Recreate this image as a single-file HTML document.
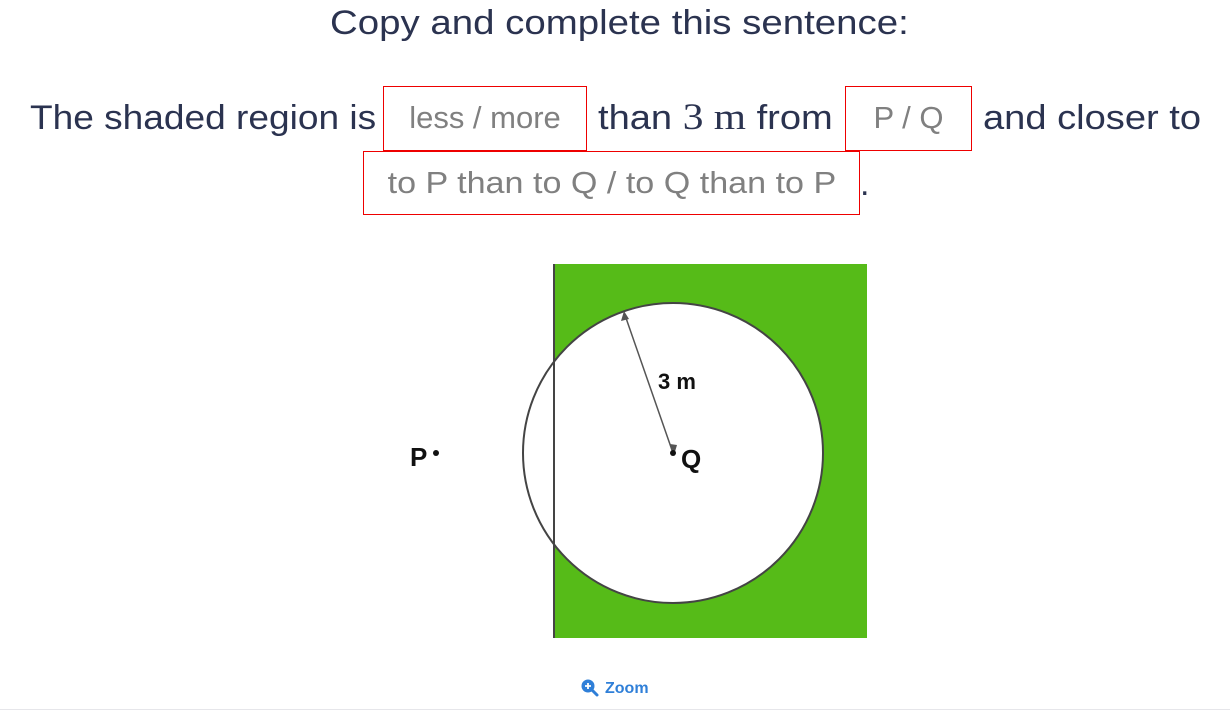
<!DOCTYPE html>
<html><head><meta charset="utf-8"><style>
body{margin:0;width:1230px;height:717px;background:#fff;position:relative;overflow:hidden;font-family:"Liberation Sans",sans-serif;color:#2b3350}
.t{position:absolute;white-space:nowrap;font-size:34px;line-height:40px;transform-origin:0 50%}
.box{position:absolute;border:1px solid #e00;box-sizing:border-box;color:#808080;font-size:31px;text-align:center;line-height:62px}
.box span{display:inline-block}
</style></head><body>
<div class="t" style="left:330px;top:3px;transform:scaleX(1.13)">Copy and complete this sentence:</div>
<div class="t" style="left:30px;top:98px;transform:scaleX(1.09)">The shaded region is</div>
<div class="box" style="left:383px;top:86px;width:204px;height:65px">less / more</div>
<div class="t" style="left:598px;top:98px;transform:scaleX(1.12)">than <span style="font-family:'Liberation Serif',serif;font-size:37px">3 m</span> from</div>
<div class="box" style="left:845px;top:86px;width:127px;height:65px">P / Q</div>
<div class="t" style="left:983px;top:98px;transform:scaleX(1.12)">and closer to</div>
<div class="box" style="left:363px;top:151px;width:497px;height:64px"><span style="transform:scaleX(1.1)">to P than to Q / to Q than to P</span></div>
<div class="t" style="left:860px;top:164px">.</div>
<svg width="1230" height="717" style="position:absolute;left:0;top:0">
<rect x="554" y="264" width="313" height="374" fill="#56bb18"/>
<circle cx="673" cy="453" r="150" fill="#fff" stroke="#444" stroke-width="2"/>
<line x1="554" y1="264" x2="554" y2="638" stroke="#444" stroke-width="2"/>
<line x1="673" y1="453" x2="626" y2="318" stroke="#555" stroke-width="1.5"/>
<polygon points="624,311 621,321 629,319" fill="#555"/>
<polygon points="674,455 670,444 677,445" fill="#555"/>
<circle cx="673" cy="453" r="3" fill="#111"/>
<circle cx="436" cy="453" r="3" fill="#111"/>
<g font-family="'Liberation Sans Narrow','Liberation Sans',sans-serif" font-weight="bold" fill="#111">
<text x="658" y="389" font-size="22">3 m</text>
<text x="410" y="466" font-size="26">P</text>
<text x="681" y="468" font-size="26">Q</text>
</g>
<circle cx="588" cy="686" r="6.5" fill="#2f7fd8"/>
<line x1="592" y1="690" x2="597" y2="695" stroke="#2f7fd8" stroke-width="3" stroke-linecap="round"/>
<path d="M585 686h6M588 683v6" stroke="#fff" stroke-width="1.8"/>
<text x="605" y="693" font-family="'Liberation Sans',sans-serif" font-weight="bold" font-size="16" fill="#2f7fd8">Zoom</text>
<line x1="0" y1="709.5" x2="1230" y2="709.5" stroke="#e6e6ea" stroke-width="1"/>
</svg>
</body></html>
